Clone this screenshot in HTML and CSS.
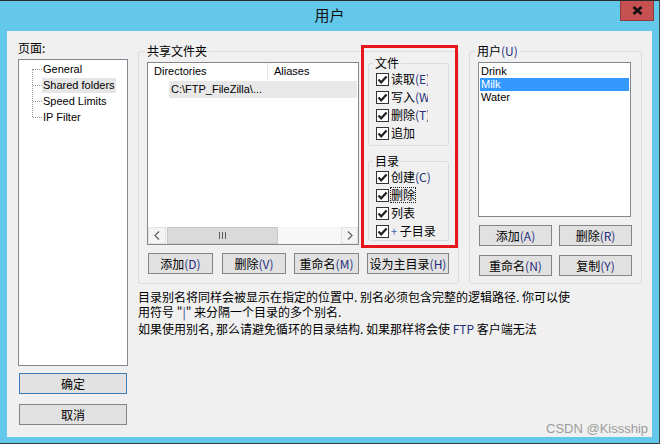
FILE: index.html
```html
<!DOCTYPE html>
<html lang="zh-CN">
<head>
<meta charset="utf-8">
<title>用户</title>
<link rel="stylesheet" href="styles.css">
</head>
<body>
<div class="window">
  <div class="titlebar">
    <span></span>
    <span class="title">用户</span>
    <span class="close"><svg width="11" height="9" viewBox="0 0 11 9"><path d="M1.5 1 L9.5 8 M9.5 1 L1.5 8" stroke="#111" stroke-width="2.6" fill="none"/></svg></span>
  </div>
  <div class="content">
    <div class="leftcol">
      <div class="label cjk">页面:</div>
      <div class="tree">
        <ul class="tree-items">
          <li><span class="conn"></span><span class="tt">General</span></li>
          <li><span class="conn"></span><span class="tt sel">Shared folders</span></li>
          <li><span class="conn"></span><span class="tt">Speed Limits</span></li>
          <li><span class="conn"></span><span class="tt">IP Filter</span></li>
        </ul>
      </div>
      <button class="btn wide default cjk">确定</button>
      <button class="btn wide second cjk">取消</button>
    </div>
    <div class="main">
      <div class="groups">
        <fieldset class="grp shared">
          <legend class="cjk">共享文件夹</legend>
          <div class="shared-inner">
            <div class="shared-row">
              <div class="listview">
                <div class="lv-header">
                  <div class="lv-col1">Directories</div>
                  <div class="lv-col2">Aliases</div>
                </div>
                <div class="lv-row">C:\FTP_FileZilla\...</div>
                <div class="lv-spacer"></div>
                <div class="scrollbar">
                  <div class="sb-btn"><svg width="6" height="9" viewBox="0 0 6 9"><path d="M5 0.5 L1 4.5 L5 8.5" stroke="#606060" stroke-width="1.2" fill="none"/></svg></div>
                  <div class="sb-thumb"><span class="grip"></span><span class="grip"></span><span class="grip"></span></div>
                  <div class="sb-track"></div>
                  <div class="sb-btn right"><svg width="6" height="9" viewBox="0 0 6 9"><path d="M1 0.5 L5 4.5 L1 8.5" stroke="#606060" stroke-width="1.2" fill="none"/></svg></div>
                </div>
              </div>
              <div class="perms">
                <fieldset class="grp sub">
                  <legend class="cjk">文件</legend>
                  <div class="checks clip">
                    <div class="chk"><span class="box"><svg width="11" height="11" viewBox="0 0 11 11"><path d="M1.5 5.5 L4.2 8.3 L9.6 2.4" stroke="#222" stroke-width="2.2" fill="none"/></svg></span><span class="cl cjk">读取<span class="acc">(E)</span></span></div>
                    <div class="chk"><span class="box"><svg width="11" height="11" viewBox="0 0 11 11"><path d="M1.5 5.5 L4.2 8.3 L9.6 2.4" stroke="#222" stroke-width="2.2" fill="none"/></svg></span><span class="cl cjk">写入<span class="acc">(W)</span></span></div>
                    <div class="chk"><span class="box"><svg width="11" height="11" viewBox="0 0 11 11"><path d="M1.5 5.5 L4.2 8.3 L9.6 2.4" stroke="#222" stroke-width="2.2" fill="none"/></svg></span><span class="cl cjk">删除<span class="acc">(T)</span></span></div>
                    <div class="chk"><span class="box"><svg width="11" height="11" viewBox="0 0 11 11"><path d="M1.5 5.5 L4.2 8.3 L9.6 2.4" stroke="#222" stroke-width="2.2" fill="none"/></svg></span><span class="cl cjk">追加</span></div>
                  </div>
                </fieldset>
                <fieldset class="grp sub dir">
                  <legend class="cjk">目录</legend>
                  <div class="checks">
                    <div class="chk"><span class="box"><svg width="11" height="11" viewBox="0 0 11 11"><path d="M1.5 5.5 L4.2 8.3 L9.6 2.4" stroke="#222" stroke-width="2.2" fill="none"/></svg></span><span class="cl cjk">创建<span class="acc">(C)</span></span></div>
                    <div class="chk"><span class="box"><svg width="11" height="11" viewBox="0 0 11 11"><path d="M1.5 5.5 L4.2 8.3 L9.6 2.4" stroke="#222" stroke-width="2.2" fill="none"/></svg></span><span class="cl cjk focus">删除</span></div>
                    <div class="chk"><span class="box"><svg width="11" height="11" viewBox="0 0 11 11"><path d="M1.5 5.5 L4.2 8.3 L9.6 2.4" stroke="#222" stroke-width="2.2" fill="none"/></svg></span><span class="cl cjk">列表</span></div>
                    <div class="chk"><span class="box"><svg width="11" height="11" viewBox="0 0 11 11"><path d="M1.5 5.5 L4.2 8.3 L9.6 2.4" stroke="#222" stroke-width="2.2" fill="none"/></svg></span><span class="cl cjk"><span class="plus">+</span> 子目录</span></div>
                  </div>
                </fieldset>
              </div>
            </div>
            <div class="btnrow">
              <button class="btn b1 cjk">添加<span class="acc">(D)</span></button>
              <button class="btn b2 cjk">删除<span class="acc">(V)</span></button>
              <button class="btn b3 cjk">重命名<span class="acc">(M)</span></button>
              <button class="btn b4 cjk">设为主目录<span class="acc">(H)</span></button>
            </div>
          </div>
        </fieldset>
        <fieldset class="grp users">
          <legend class="cjk">用户<span class="acc">(U)</span></legend>
          <div class="users-inner">
            <div class="userlist">
              <div class="ui">Drink</div>
              <div class="ui active">Milk</div>
              <div class="ui">Water</div>
            </div>
            <div class="ubtns">
              <button class="btn ub cjk">添加<span class="acc">(A)</span></button>
              <button class="btn ub cjk">删除<span class="acc">(R)</span></button>
            </div>
            <div class="ubtns">
              <button class="btn ub cjk">重命名<span class="acc">(N)</span></button>
              <button class="btn ub cjk">复制<span class="acc">(Y)</span></button>
            </div>
          </div>
        </fieldset>
      </div>
      <div class="desc cjk">
        <p>目录别名将同样会被显示在指定的位置中. 别名必须包含完整的逻辑路径. 你可以使<br>用符号 "<span class="acc">|</span>" 来分隔一个目录的多个别名.</p>
        <p class="p2">如果使用别名, 那么请避免循环的目录结构. 如果那样将会使 <span class="acc">FTP</span> 客户端无法</p>
      </div>
    </div>
    <div class="redbox"></div>
    <div class="watermark">CSDN @Kissship</div>
  </div>
</div>
</body>
</html>
```

FILE: styles.css
```css
* { box-sizing: border-box; }
html, body { margin: 0; padding: 0; }
body {
  background: #ffffff;
  font-family: "Liberation Sans", "Noto Sans CJK SC", sans-serif;
  font-size: 12px;
  color: #000;
  width: 663px;
  height: 446px;
  overflow: hidden;
}
.cjk { font-family: "Noto Sans CJK SC", "Liberation Sans", sans-serif; }
.acc { color: #26307c; }

.window {
  width: 660px;
  height: 444px;
  background: #64c8ea;
  border-top: 1px solid #2b2b2b;
  border-right: 1px solid #4a4a4a;
  border-bottom: 1px solid #3a3a3a;
}
.titlebar {
  height: 30px;
  display: grid;
  grid-template-columns: 1fr auto 1fr;
}
.title {
  font-family: "Noto Sans CJK SC", sans-serif;
  font-size: 15px;
  line-height: 28px;
  color: #111;
}
.close {
  justify-self: end;
  align-self: start;
  width: 34px;
  height: 20px;
  margin-right: 5px;
  background: #c75050;
  border: 1px solid #8e3c3c;
  border-top: none;
  display: flex;
  align-items: center;
  justify-content: center;
}

.content {
  position: relative;
  margin: 0 7px;
  width: 645px;
  height: 406px;
  background: #f0f0f0;
  display: flex;
  align-items: flex-start;
}

/* left column */
.leftcol {
  margin-left: 11px;
  width: 110px;
  padding-top: 10px;
  display: flex;
  flex-direction: column;
}
.label { font-size: 12px; line-height: 14px; margin-bottom: 4px; }
.tree {
  height: 307px;
  background: #fff;
  border: 1px solid #828790;
  padding-top: 1px;
}
.tree-items {
  list-style: none;
  margin: 0 0 0 13px;
  padding: 0;
  position: relative;
}
.tree-items::before {
  content: "";
  position: absolute;
  left: 0;
  top: 8px;
  bottom: 8px;
  border-left: 1px dotted #9a9a9a;
}
.tree-items li {
  height: 16px;
  display: flex;
  align-items: center;
}
.conn {
  margin-left: 1px;
  width: 9px;
  height: 0;
  border-top: 1px dotted #9a9a9a;
}
.tt {
  font-size: 11px;
  line-height: 15px;
  padding: 0 1px;
  white-space: nowrap;
}
.tt.sel { background: #e6e6e6; }

.btn {
  font-family: "Noto Sans CJK SC", "Liberation Sans", sans-serif;
  font-size: 12px;
  height: 21px;
  padding: 0;
  margin: 0;
  line-height: 19px;
  background: #e1e1e1;
  border: 1px solid #858585;
  color: #000;
  text-align: center;
  white-space: nowrap;
}
.btn.wide { width: 108px; margin-left: 1px; }
.btn.default { margin-top: 7px; border-color: #3c7eb4; }
.btn.second { margin-top: 10px; }

/* main */
.main {
  margin-left: 10px;
  padding-top: 13px;
  display: flex;
  flex-direction: column;
}
.groups { display: flex; align-items: flex-start; }
.grp {
  margin: 0;
  padding: 0;
  border: 1px solid #d5dde3;
  border-radius: 3px;
  min-width: 0;
}
.grp > legend {
  font-size: 12px;
  line-height: 14px;
  padding: 0 2px;
}
.shared { width: 321px; height: 240px; }
.shared > legend { margin-left: 6px; }
.shared-inner { padding: 4px 0 0 8px; }
.shared-row { display: flex; align-items: flex-start; }

.listview {
  width: 212px;
  height: 183px;
  background: #fff;
  border: 1px solid #828790;
  display: flex;
  flex-direction: column;
}
.lv-header { display: flex; height: 17px; font-size: 11px; line-height: 17px; }
.lv-col1 { width: 120px; padding-left: 6px; border-right: 1px solid #e5e5e5; }
.lv-col2 { padding-left: 6px; }
.lv-row {
  margin: 1px 1px 0 21px;
  height: 17px;
  background: #e8e8e8;
  font-size: 11px;
  line-height: 17px;
  padding-left: 2px;
  white-space: nowrap;
}
.lv-spacer { flex: 1; }
.scrollbar { height: 17px; display: flex; background: #f7f7f7; }
.sb-btn {
  width: 18px;
  background: #f4f4f4;
  border: 1px solid #e3e3e3;
  display: flex;
  align-items: center;
  justify-content: center;
}
.sb-btn.right { width: 17px; }
.sb-thumb {
  width: 111px;
  margin-left: 1px;
  background: #dadada;
  border: 1px solid #c8c8c8;
  display: flex;
  align-items: center;
  justify-content: center;
  gap: 2px;
}
.grip { width: 1px; height: 7px; background: #5c5c5c; }
.sb-track { flex: 1; }

.perms { margin-left: 9px; margin-top: -6px; width: 81px; }
.sub { width: 81px; }
.sub > legend { margin-left: 4px; }
.sub.dir { margin-top: 8px; }
.checks { padding: 0 0 3px 7px; }
.sub.dir .checks { padding-bottom: 0; }
.chk {
  height: 18px;
  display: flex;
  align-items: center;
  white-space: nowrap;
}
.checks.clip .chk { width: 52px; overflow: hidden; }
.box {
  width: 13px;
  height: 13px;
  border: 1px solid #333;
  background: #fff;
  display: flex;
  align-items: center;
  justify-content: center;
  flex: none;
}
.cl { margin-left: 2px; font-size: 12px; line-height: 14px; }
.focus { outline: 1px dotted #222; outline-offset: 0; }
.plus { color: #3a5fb0; font-size: 11px; }

.btnrow { display: flex; margin-top: 8px; margin-left: 1px; }
.b1 { width: 65px; }
.b2 { width: 64px; margin-left: 9px; }
.b3 { width: 65px; margin-left: 8px; }
.b4 { width: 82px; margin-left: 8px; }

.users { width: 173px; height: 240px; margin-left: 10px; }
.users > legend { margin-left: 5px; }
.users-inner { padding: 4px 0 0 8px; }
.userlist {
  width: 153px;
  height: 155px;
  background: #fff;
  border: 1px solid #828790;
  padding: 1px 1px 0 1px;
}
.ui {
  height: 13px;
  font-size: 11px;
  line-height: 13px;
  padding-left: 1px;
  width: 149px;
}
.ui:first-child { margin-top: 1px; }
.ui.active { background: #3399ff; color: #fff; }
.ubtns { display: flex; margin-left: 1px; margin-top: 8px; }
.ubtns + .ubtns { margin-top: 9px; }
.ub { width: 73px; }
.ub + .ub { margin-left: 7px; }

.desc { margin-top: 5px; font-size: 12px; line-height: 15px; white-space: nowrap; }
.desc p { margin: 0; }
.desc .p2 { margin-top: 2px; }

.redbox {
  position: absolute;
  left: 354px;
  top: 14px;
  width: 97px;
  height: 203px;
  border: 3px solid #e8151d;
}
.watermark {
  position: absolute;
  left: 539px;
  top: 390px;
  font-family: "Liberation Sans", sans-serif;
  font-size: 13px;
  line-height: 16px;
  color: #9c9c9c;
  white-space: nowrap;
}
```
